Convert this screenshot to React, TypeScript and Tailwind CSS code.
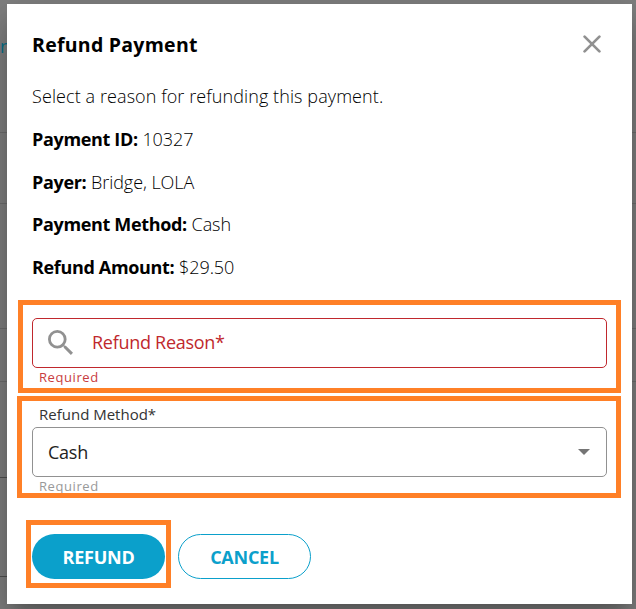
import type { ReactNode } from 'react';

function Highlight({ className }: { className: string }) {
  return <div className={`pointer-events-none absolute border-[5px] border-[#ff8027] ${className}`} />;
}

function Detail({ label, children }: { label: string; children: ReactNode }) {
  return (
    <p className="h-[42.66px] whitespace-nowrap text-[18px] leading-6 tracking-[-0.05px]">
      <span className="font-bold tracking-[-0.34px] text-black">{label}</span> {children}
    </p>
  );
}

function Backdrop() {
  return (
    <div className="absolute inset-0 flex flex-col bg-[#808080]">
      <div className="h-[133px] border-b border-[#6e6e6e] pt-[34px] text-[18px] leading-6 text-[#06728c]">n</div>
      <div className="h-[71px] border-b border-[#6e6e6e]" />
      <div className="h-[125px] border-b border-[#6e6e6e]" />
      <div className="h-[53px] border-b border-[#6e6e6e]" />
      <div className="h-24 w-10 border-b border-[#505050]" />
      <div className="h-[99px] w-10 border-b border-[#505050]" />
    </div>
  );
}

export default function App() {
  return (
    <div className="relative h-[609px] w-[636px] overflow-hidden pl-[7px] pt-1 font-['Open_Sans',sans-serif]">
      <Backdrop />
      <main className="relative h-[600px] w-[625px] bg-white pl-[25px] pr-[25px] pt-7 font-light text-black shadow-[0_11px_15px_-7px_rgba(0,0,0,0.2),0_24px_38px_3px_rgba(0,0,0,0.14),0_9px_46px_8px_rgba(0,0,0,0.12)]">
        <header className="flex h-[52.4px] items-start justify-between">
          <h1 className="text-[19.5px] font-bold leading-[26px] tracking-[0.26px]">Refund Payment</h1>
          <button aria-label="Close" className="mr-[6px] mt-[3px]">
            <svg width="18" height="18" viewBox="0 0 18 18" stroke="#919191" strokeWidth="2.7" strokeLinecap="round">
              <path d="M1.6 1.6 16.4 16.4M16.4 1.6 1.6 16.4" />
            </svg>
          </button>
        </header>
        <p className="h-[42.66px] whitespace-nowrap text-[18px] leading-6 tracking-[0.09px]">Select a reason for refunding this payment.</p>
        <Detail label="Payment ID:">10327</Detail>
        <Detail label="Payer:">Bridge, LOLA</Detail>
        <Detail label="Payment Method:">Cash</Detail>
        <Detail label="Refund Amount:">$29.50</Detail>

        <section className="relative mt-[20.3px] h-[87px]">
          <div className="flex h-[50px] items-center rounded-[5px] border border-[#c0282d] pl-[15px] text-[#c0282d]">
            <svg width="25" height="25" viewBox="3 3 17.49 17.49" fill="#919191">
              <path d="M15.5 14h-.79l-.28-.27A6.471 6.471 0 0 0 16 9.5 6.5 6.5 0 1 0 9.5 16c1.61 0 3.09-.59 4.23-1.57l.27.28v.79l5 4.99L20.49 19l-4.99-5zm-6 0C7.01 14 5 11.99 5 9.5S7.01 5 9.5 5 14 7.01 14 9.5 11.99 14 9.5 14z" />
            </svg>
            <span className="ml-[19px] text-[18px] font-normal tracking-[-0.28px]">Refund Reason*</span>
          </div>
          <p className="pl-[7px] text-[13px] font-normal leading-[18px] tracking-[0.58px] text-[#c83c40]">Required</p>
          <Highlight className="-left-[14px] -top-[18px] h-[93px] w-[603px]" />
        </section>

        <section className="relative h-[129px]">
          <p className="h-[22px] pl-[7px] text-[15px] font-normal leading-[18px] text-[#333]">Refund Method*</p>
          <div className="flex h-[50px] items-center justify-between rounded-[5px] border border-[#919191] pl-[15px] pr-4">
            <span className="pt-[2px] text-[18px] font-normal tracking-[-0.25px] text-[#222]">Cash</span>
            <svg width="12" height="6" viewBox="0 0 12 6" fill="#757575"><path d="M0 0h12L6 6z" /></svg>
          </div>
          <p className="pl-[7px] text-[13px] font-normal leading-[18px] tracking-[0.58px] text-[#999]">Required</p>
          <Highlight className="-left-[15px] -top-[9px] h-[102px] w-[604px]" />
        </section>

        <footer className="relative flex gap-[13px] text-[18px] font-bold tracking-[-0.25px]">
          <button className="h-[45px] w-[133px] rounded-full bg-[#0ba0cb] pt-[2px] text-white">REFUND</button>
          <button className="h-[45px] w-[133px] rounded-full border border-[#0ba0cb] pt-[2px] text-[#0ba0cb]">CANCEL</button>
          <Highlight className="-left-[6px] -top-[14px] h-[68px] w-[145px]" />
        </footer>
      </main>
    </div>
  );
}
